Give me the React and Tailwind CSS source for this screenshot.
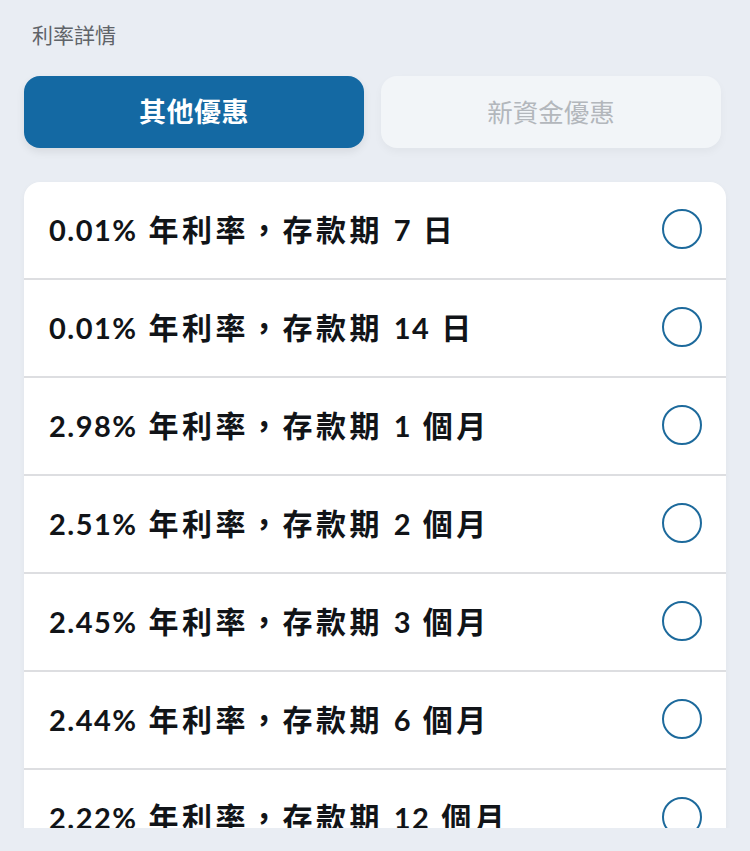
const rates = [
  { rate: '0.01%', term: '7', unit: '日' },
  { rate: '0.01%', term: '14', unit: '日' },
  { rate: '2.98%', term: '1', unit: '個月' },
  { rate: '2.51%', term: '2', unit: '個月' },
  { rate: '2.45%', term: '3', unit: '個月' },
  { rate: '2.44%', term: '6', unit: '個月' },
  { rate: '2.22%', term: '12', unit: '個月' },
  { rate: '2.10%', term: '24', unit: '個月' },
];

const font = { fontFamily: 'Lato, "Noto Sans CJK TC", sans-serif' };

export default function App() {
  return (
    <div className="w-[750px] h-[851px] bg-[#e9edf3] overflow-hidden" style={font}>
      <div className="h-[828px] flex flex-col overflow-hidden">
        <div className="px-[32px] pt-[20px] text-[21px] text-[#5f6368] leading-[30px]">利率詳情</div>
        <div className="flex gap-[17px] pl-[24px] pr-[29px] mt-[26px]">
          <button className="flex-1 h-[72px] rounded-[16px] bg-[#1469a3] text-white text-[27px] font-bold tracking-[0.5px] shadow-[0_4px_8px_rgba(0,0,0,0.08)]">
            其他優惠
          </button>
          <button className="flex-1 h-[72px] rounded-[16px] bg-[#f2f5f8] text-[#b3b7bc] text-[25.5px] shadow-[0_4px_8px_rgba(0,0,0,0.04)]">
            新資金優惠
          </button>
        </div>
        <div className="mt-[34px] ml-[24px] w-[702px] bg-white rounded-t-[16px] shadow-[0_2px_6px_rgba(0,0,0,0.04)]">
          {rates.map((r, i) => (
            <div
              key={i}
              className="flex items-center justify-between h-[98px] pb-[2px] pl-[25px] pr-[24px] border-b-2 border-[#dddee1]"
            >
              <span className="text-[29px] leading-[40px] font-bold text-[#111418] whitespace-nowrap">
                <span className="tracking-[1.5px]">{r.rate}</span>
                <span className="text-[30px] tracking-[3.5px]"> 年利率，存款期 </span>
                <span className="tracking-[1.5px]">{r.term}</span>
                <span className="text-[30px] tracking-[3.5px]"> {r.unit}</span>
              </span>
              <span className="shrink-0 w-[40px] h-[40px] rounded-full border-2 border-[#1d6a9c]" />
            </div>
          ))}
        </div>
      </div>
    </div>
  );
}
